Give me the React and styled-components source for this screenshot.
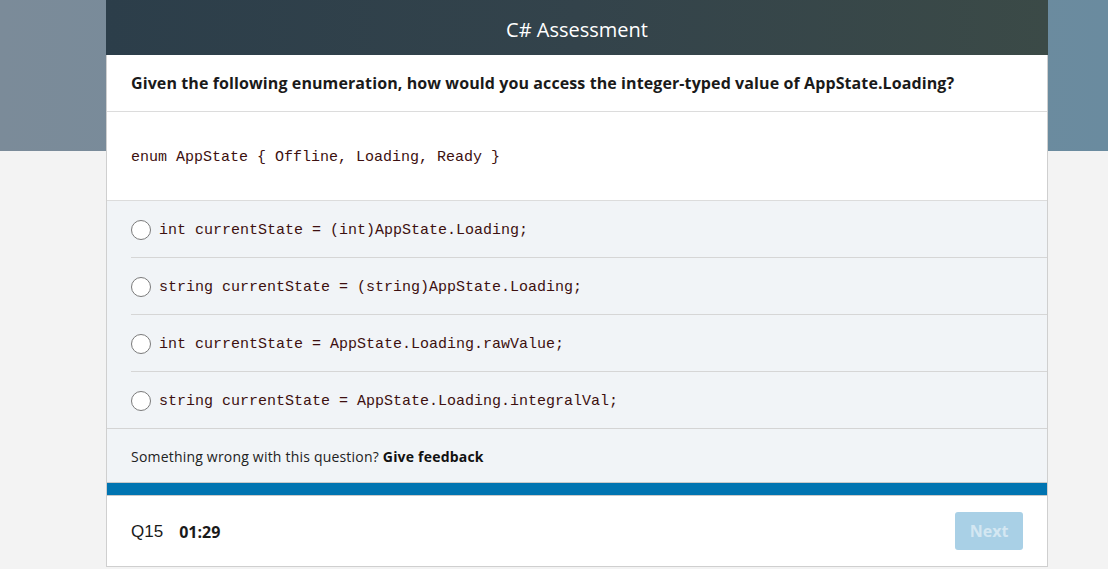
import React from 'react' ;
import styled, { createGlobalStyle } from 'styled-components' ;

const GlobalStyle = createGlobalStyle`
    html, body {
        margin : 0 ;
        padding : 0 ;
    }
    body {
        font-family : "Open Sans", "Noto Sans", sans-serif ;
        background : linear-gradient(90deg, #7b8b99 0%, #6a8b9f 100%) top left / 100% 151px no-repeat, #f3f3f3 ;
        min-height : 569px ;
    }
`;

const Page = styled.div`
    padding-left : 106px ;
`;

const Card = styled.div`
    width : 940px ;
    border : 1px solid #cfcfcf ;
    border-top : none ;
    background : #fff ;
`;

const Header = styled.div`
    height : 55px ;
    margin : 0 -1px ;
    background : linear-gradient(90deg, #2c3e4a 0%, #33434b 50%, #3b4a47 100%) ;
    color : #fff ;
    display : flex ;
    align-items : center ;
    justify-content : center ;
    font-size : 20px ;
    padding-top : 4px ;
    box-sizing : border-box ;
`;

const Question = styled.div`
    height : 57px ;
    box-sizing : border-box ;
    border-bottom : 1px solid #dcdcdc ;
    padding : 0 24px ;
    display : flex ;
    align-items : center ;
    font-size : 16px ;
    font-weight : 700 ;
    color : #1a1a1a ;
    letter-spacing : 0.1px ;
`;

const Code = styled.pre`
    margin : 0 ;
    height : 88px ;
    box-sizing : border-box ;
    padding : 3px 24px 0 ;
    display : flex ;
    align-items : center ;
    font-family : "Liberation Mono", monospace ;
    font-size : 15px ;
    color : #3d1010 ;
`;

const Options = styled.div`
    background : #f1f4f7 ;
    border-top : 1px solid #dcdcdc ;
    border-bottom : 1px solid #d4d4d4 ;
`;

const Option = styled.label`
    display : flex ;
    align-items : center ;
    height : ${props => props.last ? '56px' : '57px'} ;
    box-sizing : border-box ;
    padding-top : 1px ;
    margin-left : 24px ;
    border-bottom : ${props => props.last ? 'none' : '1px solid #d6d6d6'} ;
    cursor : pointer ;
`;

const Radio = styled.span`
    width : 20px ;
    height : 20px ;
    box-sizing : border-box ;
    border-radius : 50% ;
    border : 1.5px solid #7a7a7a ;
    background : #fff ;
    margin-right : 8px ;
    flex-shrink : 0 ;
`;

const OptionText = styled.span`
    font-family : "Liberation Mono", monospace ;
    font-size : 15px ;
    color : #3d1010 ;
    white-space : pre ;
    padding-top : 1px ;
`;

const Feedback = styled.div`
    background : #f1f4f7 ;
    height : 53px ;
    box-sizing : border-box ;
    padding : 2px 24px 0 ;
    display : flex ;
    align-items : center ;
    font-size : 14px ;
    color : #222 ;
    letter-spacing : 0.2px ;
    b {
        font-weight : 700 ;
        color : #111 ;
    }
`;

const Progress = styled.div`
    height : 12px ;
    background : #0074b1 ;
    border-top : 1px solid #c9c9c9 ;
    border-bottom : 1px solid #c9c9c9 ;
`;

const Footer = styled.div`
    height : 70px ;
    box-sizing : border-box ;
    padding : 0 24px ;
    display : flex ;
    align-items : center ;
    justify-content : space-between ;
`;

const Status = styled.div`
    display : flex ;
    align-items : center ;
    gap : 16px ;
    font-size : 16px ;
    color : #1a1a1a ;
    padding-top : 2px ;
`;

const Number = styled.span`
    font-family : "Liberation Sans", sans-serif ;
    font-size : 17px ;
`;

const Timer = styled.span`
    font-weight : 700 ;
`;

const NextButton = styled.button`
    width : 68px ;
    height : 38px ;
    border : none ;
    border-radius : 3px ;
    background : #a9d0e6 ;
    color : #d4e7f2 ;
    font-family : "Open Sans", sans-serif ;
    font-size : 16px ;
    font-weight : 700 ;
    cursor : not-allowed ;
`;

const options = [
    'int currentState = (int)AppState.Loading;',
    'string currentState = (string)AppState.Loading;',
    'int currentState = AppState.Loading.rawValue;',
    'string currentState = AppState.Loading.integralVal;',
];

const App = () =>
    <>
        <GlobalStyle />
        <Page>
            <Card>
                <Header>C# Assessment</Header>
                <Question>
                    Given the following enumeration, how would you access the integer-typed value of AppState.Loading?
                </Question>
                <Code>enum AppState {'{'} Offline, Loading, Ready {'}'}</Code>
                <Options>
                    {options.map((text, i) =>
                        <Option key={i} last={i === options.length - 1}>
                            <Radio />
                            <OptionText>{text}</OptionText>
                        </Option>
                    )}
                </Options>
                <Feedback>
                    Something wrong with this question?&nbsp;<b>Give feedback</b>
                </Feedback>
                <Progress />
                <Footer>
                    <Status>
                        <Number>Q15</Number>
                        <Timer>01:29</Timer>
                    </Status>
                    <NextButton disabled>Next</NextButton>
                </Footer>
            </Card>
        </Page>
    </>
 ;

export default App;
